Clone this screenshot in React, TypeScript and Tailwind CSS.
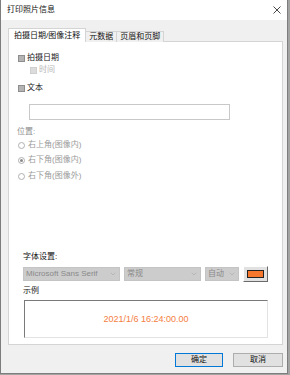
import { ChevronDown } from 'lucide-react'

const font = 'font-["Liberation_Sans","Noto_Sans_CJK_SC",sans-serif]'

function Check({ label, disabled }: { label: string; disabled?: boolean }) {
  return (
    <div className="h-[12px] flex items-center gap-[2px]">
      <span
        className={`w-[7px] h-[7px] border flex items-center justify-center ${
          disabled ? 'border-[#cfcfcf] bg-[#efefef]' : 'border-[#8e8e8e] bg-[#e6e6e6]'
        }`}
      >
        <span className={`w-[5px] h-[5px] ${disabled ? 'bg-[#dcdcdc]' : 'bg-[#b4b4b4]'}`} />
      </span>
      <span className={disabled ? 'text-[#b5b5b5]' : 'text-[#222]'}>{label}</span>
    </div>
  )
}

function Radio({ label, checked }: { label: string; checked?: boolean }) {
  return (
    <div className="h-[12px] flex items-center gap-[3px] text-[#9a9a9a]">
      <span className="w-[7px] h-[7px] rounded-full border border-[#b0b0b0] bg-white flex items-center justify-center">
        {checked && <span className="w-[3px] h-[3px] rounded-full bg-[#8a8a8a]" />}
      </span>
      <span>{label}</span>
    </div>
  )
}

function Select({ value, width }: { value: string; width: string }) {
  return (
    <div className={`${width} h-[14px] bg-[#cccccc] border border-[#c4c4c4] flex items-center justify-between pl-[2px] pr-[2px] text-[#8a8a8a]`}>
      <span className="whitespace-nowrap">{value}</span>
      <ChevronDown className="w-[8px] h-[8px] text-[#a0a0a0]" strokeWidth={1.5} />
    </div>
  )
}

export default function App() {
  return (
    <div className={`w-[290px] h-[375px] bg-[#a3a3a3] flex text-[8px] leading-none ${font}`}>
      <div className="w-[288px] h-[374px] bg-[#f0f0f0] border-l border-r border-b border-[#7d7d7d] flex flex-col">
        {/* title bar */}
        <div className="h-[20px] bg-white flex items-center justify-between pl-[6px] pr-[5px]">
          <span className="text-[#111]">打印照片信息</span>
          <svg width="8" height="8" viewBox="0 0 8 8" className="mr-[1px]">
            <path d="M0.5 0.5 L7.5 7.5 M7.5 0.5 L0.5 7.5" stroke="#333" strokeWidth="0.9" />
          </svg>
        </div>

        <div className="flex-1 flex flex-col pl-[7px] pr-[4px]">
          {/* tabs */}
          <div className="flex items-end mt-[8px] h-[14px] relative z-10">
            <div className="h-[14px] px-[5px] bg-white border border-b-0 border-[#d4d4d4] flex items-center text-[#111]">
              拍摄日期/图像注释
            </div>
            <div className="h-[11px] px-[3px] bg-[#f0f0f0] border border-l-0 border-b-0 border-[#d4d4d4] flex items-center text-[#111]">
              元数据
            </div>
            <div className="h-[11px] px-[3px] bg-[#f0f0f0] border border-l-0 border-b-0 border-[#d4d4d4] flex items-center text-[#111]">
              页眉和页脚
            </div>
          </div>

          {/* panel */}
          <div className="h-[304px] -mt-[1px] bg-white border border-[#d4d4d4] flex flex-col pl-[9px]">
            <div className="mt-[10px]">
              <Check label="拍摄日期" />
            </div>
            <div className="pl-[12px]">
              <Check label="时间" disabled />
            </div>
            <div className="mt-[6px]">
              <Check label="文本" />
            </div>
            <div className="mt-[10px] ml-[11px] w-[201px] h-[16px] border border-[#c8c8c8] bg-white" />
            <div className="mt-[6px] h-[12px] flex items-center text-[#8c8c8c] -ml-[1px]">位置:</div>
            <div className="mt-[1px]">
              <Radio label="右上角(图像内)" />
            </div>
            <div className="mt-[3px]">
              <Radio label="右下角(图像内)" checked />
            </div>
            <div className="mt-[4px]">
              <Radio label="右下角(图像外)" />
            </div>

            <div className="mt-[69px] pl-[5px] h-[12px] flex items-center text-[#111]">字体设置:</div>
            <div className="mt-[3px] pl-[5px] flex items-center">
              <Select value="Microsoft Sans Serif" width="w-[97px]" />
              <div className="ml-[4px]">
                <Select value="常规" width="w-[77px]" />
              </div>
              <div className="ml-[4px]">
                <Select value="自动" width="w-[34px]" />
              </div>
              <div className="ml-[4px] w-[25px] h-[16px] bg-[#e1e1e1] border border-t-white border-l-white border-r-[#6a6a6a] border-b-[#6a6a6a] flex items-center justify-center">
                <span className="w-[17px] h-[8px] bg-[#f7772d] border border-[#222]" />
              </div>
            </div>
            <div className="mt-[3px] pl-[5px] h-[12px] flex items-center text-[#111]">示例</div>
            <div className="mt-[3px] ml-[6px] w-[244px] h-[38px] bg-white border border-t-[#7a7a7a] border-l-[#7a7a7a] border-r-[#e3e3e3] border-b-[#e3e3e3] flex items-center justify-center">
              <span className="text-[9px] text-[#f47d3f] font-['Liberation_Sans',sans-serif]">2021/1/6 16:24:00.00</span>
            </div>
          </div>

          {/* buttons */}
          <div className="mt-[8px] flex justify-end gap-[10px]">
            <button className="w-[48px] h-[14px] bg-[#e1e1e1] border border-[#0078d7] text-[#111] flex items-center justify-center">
              确定
            </button>
            <button className="w-[50px] h-[14px] bg-[#e1e1e1] border border-[#adadad] text-[#111] flex items-center justify-center">
              取消
            </button>
          </div>
        </div>
      </div>
    </div>
  )
}
